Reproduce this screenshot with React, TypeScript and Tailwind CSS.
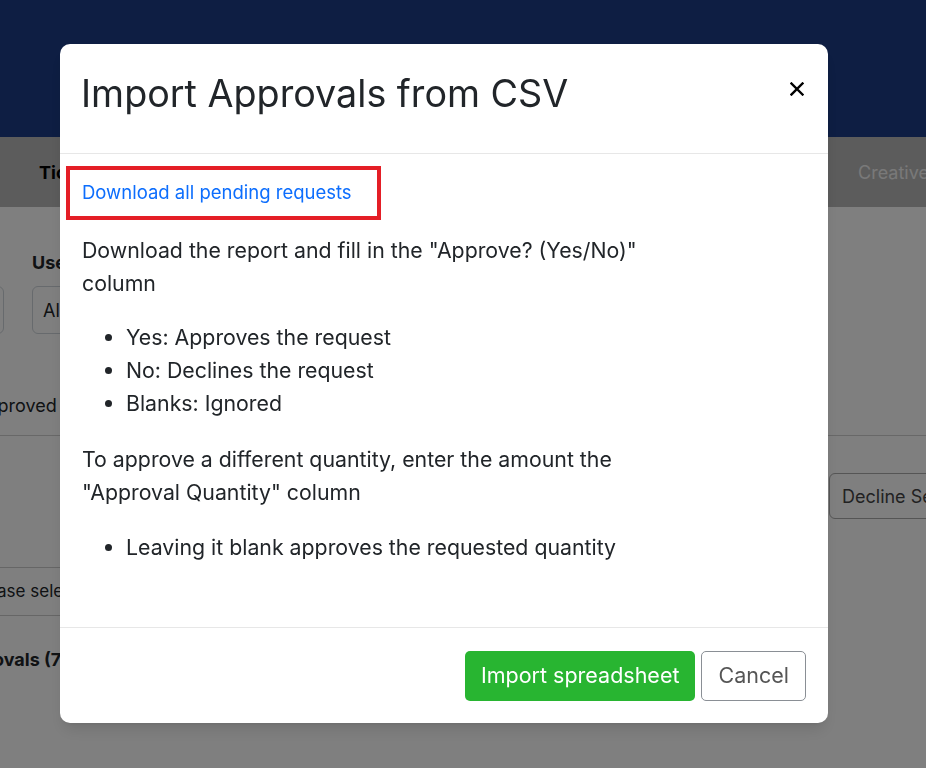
import React from 'react';

const font = { fontFamily: 'Inter, "Noto Sans", sans-serif' };

function BackgroundPage() {
    return (
        <div className="min-h-[768px] bg-white overflow-hidden text-[#212529]">
            <header className="h-[137px] bg-[#1c3c86]" />
            <div className="h-[70px] bg-[#b8b8b8] flex items-center justify-between pl-[39px] pr-0">
                <span className="text-[18px] font-bold text-black">Tickets</span>
                <span className="text-[18px] text-[#f2f2f2] w-[68px] overflow-hidden whitespace-nowrap">Creative</span>
            </div>
            <div className="flex items-end gap-[28px] -ml-[100px] pt-[42px]">
                <div className="w-[104px] h-[48px] border border-[#ced4da] rounded-[6px]" />
                <div className="flex flex-col gap-[10px]">
                    <span className="text-[18px] font-bold">User</span>
                    <div className="w-[300px] h-[48px] border border-[#ced4da] rounded-[6px] flex items-center pl-[10px] text-[18px]">All</div>
                </div>
            </div>
            <div className="-ml-[26px] mt-[58px] text-[18px]">Approved</div>
            <div className="mt-[16px] border-t border-[#d0d0d0]" />
            <div className="ml-[829px] mt-[37px] w-[200px] h-[46px] border border-[#aaaaaa] rounded-l-[6px] flex items-center pl-[12px] text-[18px] text-[#444] whitespace-nowrap">
                Decline Selected
            </div>
            <div className="mt-[48px] -ml-[40px] w-[140px] h-[49px] border-y border-[#cccccc] flex items-center pl-[12px] text-[17px] whitespace-nowrap">
                Please select
            </div>
            <div className="-ml-[50px] mt-[30px] text-[18px] font-bold whitespace-nowrap">Approvals (7)</div>
        </div>
    );
}

function CloseIcon() {
    return (
        <svg width="14" height="14" viewBox="0 0 14 14" fill="none" stroke="#000" strokeWidth="2.4" strokeLinecap="square">
            <path d="M1.5 1.5l11 11M12.5 1.5l-11 11" />
        </svg>
    );
}

function ImportModal() {
    return (
        <div className="fixed inset-0 bg-black/50">
            <div className="ml-[60px] mt-[44px] w-[768px] bg-white rounded-[10px] shadow-lg text-[#212529]">
                <div className="h-[110px] flex items-center justify-between pl-[21px] pr-[20px] pb-[11px] border-b border-[#e7e7e7]">
                    <h1 className="text-[37.7px] font-normal">Import Approvals from CSV</h1>
                    <button className="p-1 -mt-[9px]">
                        <CloseIcon />
                    </button>
                </div>
                <div className="h-[473px] px-[22px] pt-[12px] text-[21.3px] leading-[33px]">
                    <div className="-ml-[16px] w-[315px] h-[54px] border-[4px] border-[#e41e26] flex items-center pl-[12px] pb-[3px]">
                        <a href="#" className="text-[18.5px] leading-[24px] text-[#0d6efd]">Download all pending requests</a>
                    </div>
                    <p className="mt-[14px]">
                        Download the report and fill in the "Approve? (Yes/No)"
                        <br />
                        column
                    </p>
                    <ul className="list-disc pl-[44px] mt-[21px]">
                        <li>Yes: Approves the request</li>
                        <li>No: Declines the request</li>
                        <li>Blanks: Ignored</li>
                    </ul>
                    <p className="mt-[23px]">
                        To approve a different quantity, enter the amount the
                        <br />
                        "Approval Quantity" column
                    </p>
                    <ul className="list-disc pl-[44px] mt-[22px]">
                        <li>Leaving it blank approves the requested quantity</li>
                    </ul>
                </div>
                <div className="h-[96px] border-t border-[#e7e7e7] flex items-center justify-end gap-[6px] pr-[22px]">
                    <button className="h-[50px] px-[16px] rounded-[5px] bg-[#28b531] text-white text-[21.5px]">
                        Import spreadsheet
                    </button>
                    <button className="h-[50px] px-[16px] rounded-[5px] border border-[#8a8f95] text-[#555] text-[21.5px] bg-white">
                        Cancel
                    </button>
                </div>
            </div>
        </div>
    );
}

export default function App() {
    return (
        <div style={font} className="relative w-[926px] h-[768px] overflow-hidden">
            <BackgroundPage />
            <ImportModal />
        </div>
    );
}
